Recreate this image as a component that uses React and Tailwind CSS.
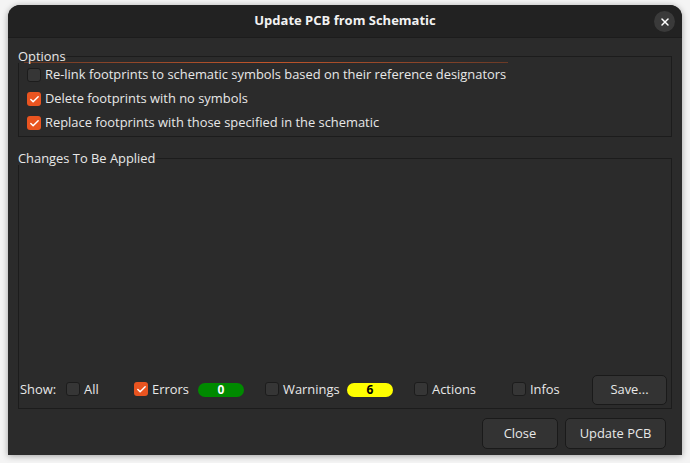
import { Check, X } from 'lucide-react';

function Box({ checked }) {
    return checked ? (
        <span className="flex h-[14px] w-[14px] shrink-0 items-center justify-center rounded-[3px] bg-[#e95420]">
            <Check size={11} strokeWidth={3.2} className="text-white" />
        </span>
    ) : (
        <span className="h-[14px] w-[14px] shrink-0 rounded-[3px] border border-[#1c1c1c] bg-[#363636]" />
    );
}

function Option({ checked, label }) {
    return (
        <div className="flex h-[24px] items-center gap-[4px]">
            <Box checked={checked} />
            <span>{label}</span>
        </div>
    );
}

function Filter({ checked, label, className }) {
    return (
        <div className={`flex shrink-0 items-center gap-[4px] ${className}`}>
            <Box checked={checked} />
            <span>{label}</span>
        </div>
    );
}

export default function App() {
    const options = [
        { label: 'Re-link footprints to schematic symbols based on their reference designators', checked: false },
        { label: 'Delete footprints with no symbols', checked: true },
        { label: 'Replace footprints with those specified in the schematic', checked: true },
    ];

    return (
        <div className="h-[463px] w-[690px] overflow-hidden bg-[#f4f4f4] pl-[8px] pt-[5px] font-['Open_Sans',sans-serif] text-[12.9px] text-[#e8e8e8]">
            <div className="flex h-[450px] w-[674px] flex-col rounded-t-[12px] bg-[#2b2b2b] shadow-[0_1px_6px_rgba(0,0,0,0.35)]">
                {/* Title bar */}
                <div className="relative flex h-[33px] shrink-0 items-center justify-center rounded-t-[12px] border-b border-[#1c1c1c] bg-[#222222]">
                    <span className="text-[13px] font-bold text-[#f2f2f2]">Update PCB from Schematic</span>
                    <button className="absolute right-[7px] top-[6px] flex h-[21px] w-[21px] items-center justify-center rounded-full bg-[#3a3a3a]">
                        <X size={12} strokeWidth={3} className="text-white" />
                    </button>
                </div>

                <div className="flex flex-1 flex-col px-[10px] pt-[11px]">
                    {/* Options */}
                    <fieldset className="m-0 border border-[#1c1c1c] px-0 pb-0">
                        <legend className="-ml-px px-0 leading-[14px]">Options</legend>
                        <div className="h-[74px]">
                            <div className="ml-[5px] mt-[-1px] h-px w-[484px] bg-gradient-to-r from-[#6b3a26] via-[#c2552a] to-[#6b3a26]" />
                            <div className="pl-[8px]">
                                {options.map((o) => (
                                    <Option key={o.label} checked={o.checked} label={o.label} />
                                ))}
                            </div>
                        </div>
                    </fieldset>

                    {/* Changes */}
                    <fieldset className="m-0 mt-[14px] border border-[#1c1c1c] px-0 pb-0">
                        <legend className="-ml-px px-0 leading-[14px]">Changes To Be Applied</legend>
                        <div className="flex h-[243px] flex-col">
                            <div className="flex-1" />
                            <div className="mb-[4px] flex h-[29px] items-center pl-px pr-[4px]">
                                <span className="w-[46px] shrink-0">Show:</span>
                                <Filter label="All" className="w-[68px]" />
                                <Filter label="Errors" checked className="w-[64px]" />
                                <span className="mr-[21px] flex h-[14px] w-[46px] shrink-0 items-center justify-center rounded-full bg-[#008a00] text-[12px] font-bold text-white">0</span>
                                <Filter label="Warnings" className="w-[82px]" />
                                <span className="mr-[21px] flex h-[14px] w-[46px] shrink-0 items-center justify-center rounded-full bg-[#ffff00] text-[12px] font-bold text-black">6</span>
                                <Filter label="Actions" className="w-[98px]" />
                                <Filter label="Infos" />
                                <button className="ml-auto h-[30px] w-[75px] rounded-[5px] border border-[#1a1a1a] bg-[#333333]">Save...</button>
                            </div>
                        </div>
                    </fieldset>

                    {/* Footer */}
                    <div className="mt-[9px] flex justify-end gap-[7px] pr-[6px]">
                        <button className="h-[31px] w-[76px] rounded-[5px] border border-[#1a1a1a] bg-[#333333]">Close</button>
                        <button className="h-[31px] w-[101px] rounded-[5px] border border-[#1a1a1a] bg-[#333333]">Update PCB</button>
                    </div>
                </div>
            </div>
        </div>
    );
}
